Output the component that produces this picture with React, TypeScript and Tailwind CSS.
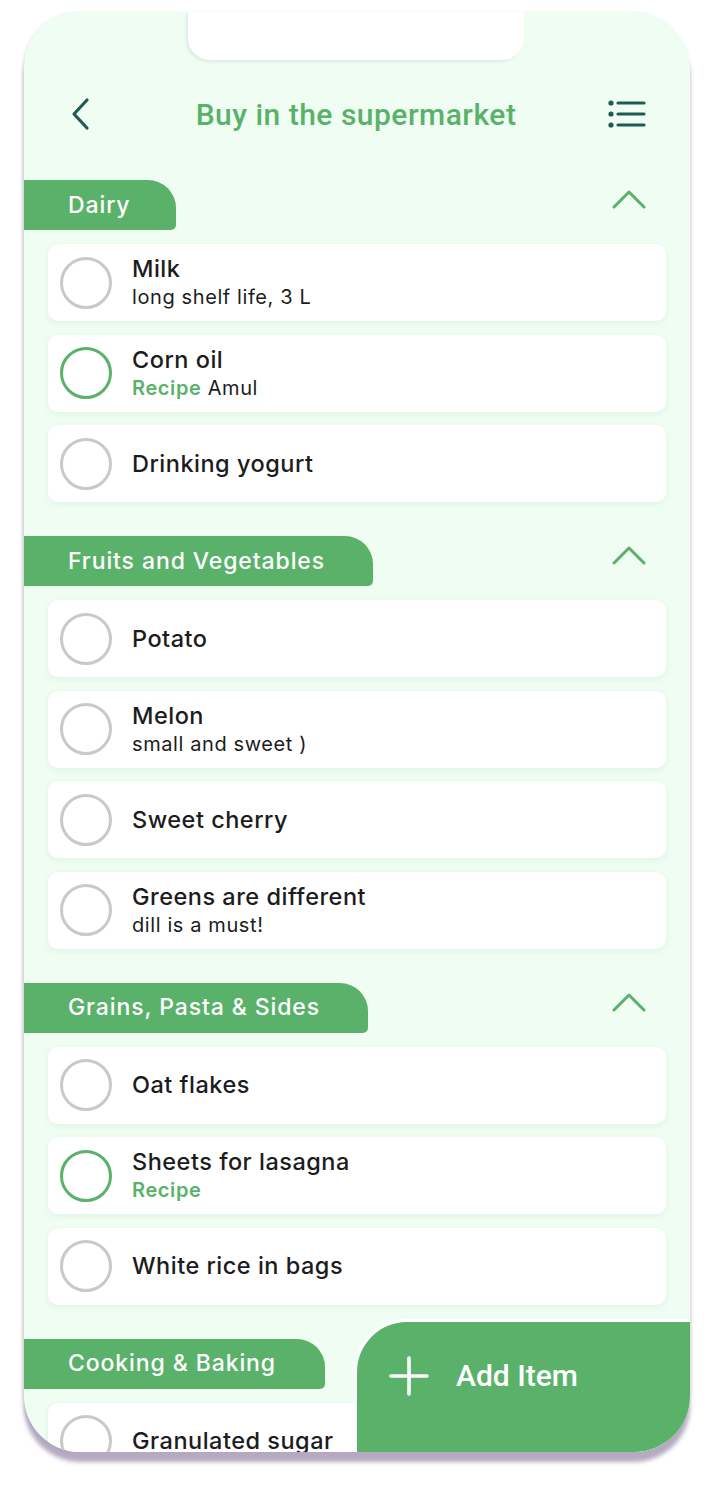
import React from "react";

type Item = { title: string; sub?: string; recipe?: boolean; checked?: boolean };
type Section = { name: string; tabW: number; items: Item[]; chevron?: boolean };

const sections: Section[] = [
  {
    name: "Dairy",
    tabW: 152,
    chevron: true,
    items: [
      { title: "Milk", sub: "long shelf life, 3 L" },
      { title: "Corn oil", sub: "Amul", recipe: true, checked: true },
      { title: "Drinking yogurt" },
    ],
  },
  {
    name: "Fruits and Vegetables",
    tabW: 349,
    chevron: true,
    items: [
      { title: "Potato" },
      { title: "Melon", sub: "small and sweet )" },
      { title: "Sweet cherry" },
      { title: "Greens are different", sub: "dill is a must!" },
    ],
  },
  {
    name: "Grains, Pasta & Sides",
    tabW: 344,
    chevron: true,
    items: [
      { title: "Oat flakes" },
      { title: "Sheets for lasagna", recipe: true, checked: true },
      { title: "White rice in bags" },
    ],
  },
  {
    name: "Cooking & Baking",
    tabW: 301,
    chevron: false,
    items: [{ title: "Granulated sugar" }],
  },
];

const heading = { fontFamily: "Roboto, 'Noto Sans', sans-serif" };
const body = { fontFamily: "Inter, 'Noto Sans', sans-serif" };

function ChevronUp() {
  return (
    <svg width="34" height="20" viewBox="0 0 34 20" fill="none">
      <path d="M2 18 L17 3 L32 18" stroke="#5ab26a" strokeWidth="3" strokeLinecap="round" strokeLinejoin="round" />
    </svg>
  );
}

function Card({ item }: { item: Item }) {
  return (
    <div className="h-[77px] rounded-[10px] bg-white shadow-[0_2px_6px_rgba(60,120,80,0.08)] flex items-center pl-[12px]">
      <div
        className={
          "w-[52px] h-[52px] rounded-full border-[3px] shrink-0 " +
          (item.checked ? "border-[#5ab26a]" : "border-[#c9c9c9]")
        }
      />
      <div className="ml-[20px] flex flex-col" style={body}>
        <div className="text-[23.5px] leading-[28px] text-[#1c1c1e] font-medium tracking-[0.5px] whitespace-nowrap">
          {item.title}
        </div>
        {(item.sub || item.recipe) && (
          <div className="mt-[2px] text-[20px] leading-[25px] text-[#1c1c1e] tracking-[0.6px] whitespace-nowrap">
            {item.recipe && <span className="text-[#5ab26a] font-semibold">Recipe</span>}
            {item.recipe && item.sub ? " " : ""}
            {item.sub}
          </div>
        )}
      </div>
    </div>
  );
}

function SectionBlock({ s, first }: { s: Section; first: boolean }) {
  return (
    <div className={first ? "" : "mt-[34px]"}>
      <div className="flex items-center justify-between pr-[44px]">
        <div
          className="h-[50px] bg-[#5ab26a] rounded-tr-[28px] rounded-br-[5px] flex items-center pl-[44px] text-white text-[23px] font-medium tracking-[0.9px] whitespace-nowrap"
          style={{ ...body, width: s.tabW }}
        >
          {s.name}
        </div>
        {s.chevron && (
          <div className="mb-[12px]">
            <ChevronUp />
          </div>
        )}
      </div>
      <div className="mt-[14px] px-[24px] flex flex-col gap-[13.5px]">
        {s.items.map((it) => (
          <Card key={it.title} item={it} />
        ))}
      </div>
    </div>
  );
}

export default function App() {
  return (
    <div className="w-[714px] h-[1488px] bg-white pt-[12px] pl-[24px]">
      <div className="relative w-[666px] h-[1440px] rounded-[56px] bg-[#effdf3] overflow-hidden shadow-[0_10px_4px_rgba(120,100,140,0.55),_-2px_0_3px_rgba(0,0,0,0.06)]">
        {/* notch */}
        <div className="absolute left-[164px] top-0 w-[336px] h-[48px] bg-white rounded-b-[22px] shadow-[-2px_2px_3px_rgba(120,100,140,0.12)]" />

        {/* header */}
        <div className="mt-[72px] h-[60px] flex items-center justify-between pl-[44px] pr-[44px]">
          <svg width="24" height="36" viewBox="0 0 24 36" fill="none">
            <path d="M19 4 L6 18 L19 32" stroke="#1e5c53" strokeWidth="3.2" strokeLinecap="round" strokeLinejoin="round" />
          </svg>
          <div className="text-[30px] text-[#5ab26a] font-medium tracking-[0.5px] pl-[12px]" style={heading}>
            Buy in the supermarket
          </div>
          <svg width="38" height="30" viewBox="0 0 38 30" fill="none">
            <circle cx="3" cy="4" r="2.6" fill="#1e5c53" />
            <circle cx="3" cy="15" r="2.6" fill="#1e5c53" />
            <circle cx="3" cy="26" r="2.6" fill="#1e5c53" />
            <path d="M10 4 H36 M10 15 H36 M10 26 H36" stroke="#1e5c53" strokeWidth="3.2" strokeLinecap="round" />
          </svg>
        </div>

        <div className="mt-[36px]">
          {sections.map((s, i) => (
            <SectionBlock key={s.name} s={s} first={i === 0} />
          ))}
        </div>

        {/* Add item button */}
        <div className="absolute left-[333px] top-[1310px] right-0 bottom-0 bg-[#5ab26a] rounded-tl-[50px] shadow-[0_0_0_3px_rgba(255,255,255,0.9)] flex items-start pt-[34px] pl-[32px]">
          <svg width="40" height="40" viewBox="0 0 40 40" fill="none">
            <path d="M20 2 V38 M2 20 H38" stroke="white" strokeWidth="3.6" strokeLinecap="round" />
          </svg>
          <div className="ml-[27px] text-white text-[30px] font-medium leading-[40px]" style={heading}>
            Add Item
          </div>
        </div>
      </div>
    </div>
  );
}
